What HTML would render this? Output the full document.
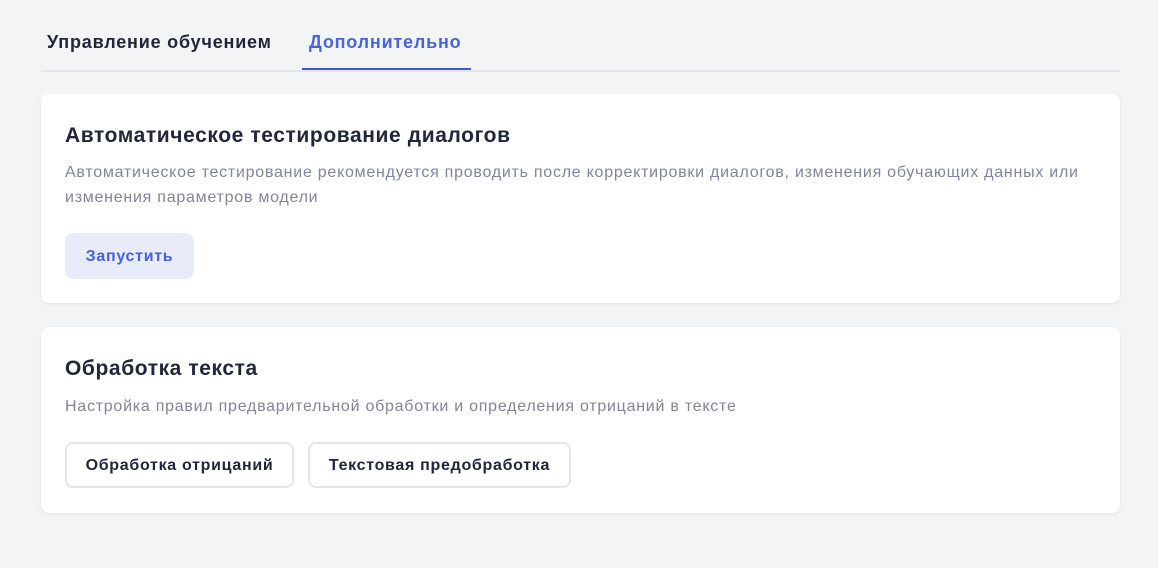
<!DOCTYPE html><html><head><meta charset="utf-8"><style>
body{margin:0;width:1158px;height:568px;background:#f3f4f6;font-family:"Liberation Sans",sans-serif;position:relative;overflow:hidden}
.tabs{position:absolute;left:41px;top:0;width:1079px;height:70px;border-bottom:2px solid #e3e5e9}
.tab{position:absolute;top:32px;font-size:18px;font-weight:bold;color:#22263a;letter-spacing:0.8px}
.tab.a{color:#4863e0}
.ul{position:absolute;left:302px;top:68px;width:169px;height:2px;background:#3f5ae0}
.card{position:absolute;left:41px;width:1079px;background:#fff;border-radius:8px;box-shadow:0 1px 3px rgba(0,0,0,.08)}
h2{position:absolute;left:24px;margin:0;font-size:21px;letter-spacing:0.6px;color:#22263a}
p{position:absolute;left:24px;margin:0;font-size:16px;letter-spacing:0.75px;line-height:25px;color:#80859a;width:1030px}
.btn{position:absolute;height:46px;border-radius:8px;font-size:16px;font-weight:bold;line-height:48px;text-align:center;box-sizing:border-box;letter-spacing:0.7px}
</style></head><body>
<div class="tabs"></div>
<div class="tab" style="left:47px">Управление обучением</div>
<div class="tab a" style="left:309px">Дополнительно</div>
<div class="ul"></div>
<div class="card" style="top:94px;height:209px">
<h2 style="top:30px">Автоматическое тестирование диалогов</h2>
<p style="top:66px">Автоматическое тестирование рекомендуется проводить после корректировки диалогов, изменения обучающих данных или изменения параметров модели</p>
<div class="btn" style="left:24px;top:139px;width:129px;background:#e8ebfa;color:#4660de">Запустить</div>
</div>
<div class="card" style="top:327px;height:186px">
<h2 style="top:30px">Обработка текста</h2>
<p style="top:67px">Настройка правил предварительной обработки и определения отрицаний в тексте</p>
<div class="btn" style="left:24px;top:115px;width:229px;border:2px solid #e3e5e9;color:#22263a;line-height:44px">Обработка отрицаний</div>
<div class="btn" style="left:267px;top:115px;width:263px;border:2px solid #e3e5e9;color:#22263a;line-height:44px">Текстовая предобработка</div>
</div>
</body></html>
